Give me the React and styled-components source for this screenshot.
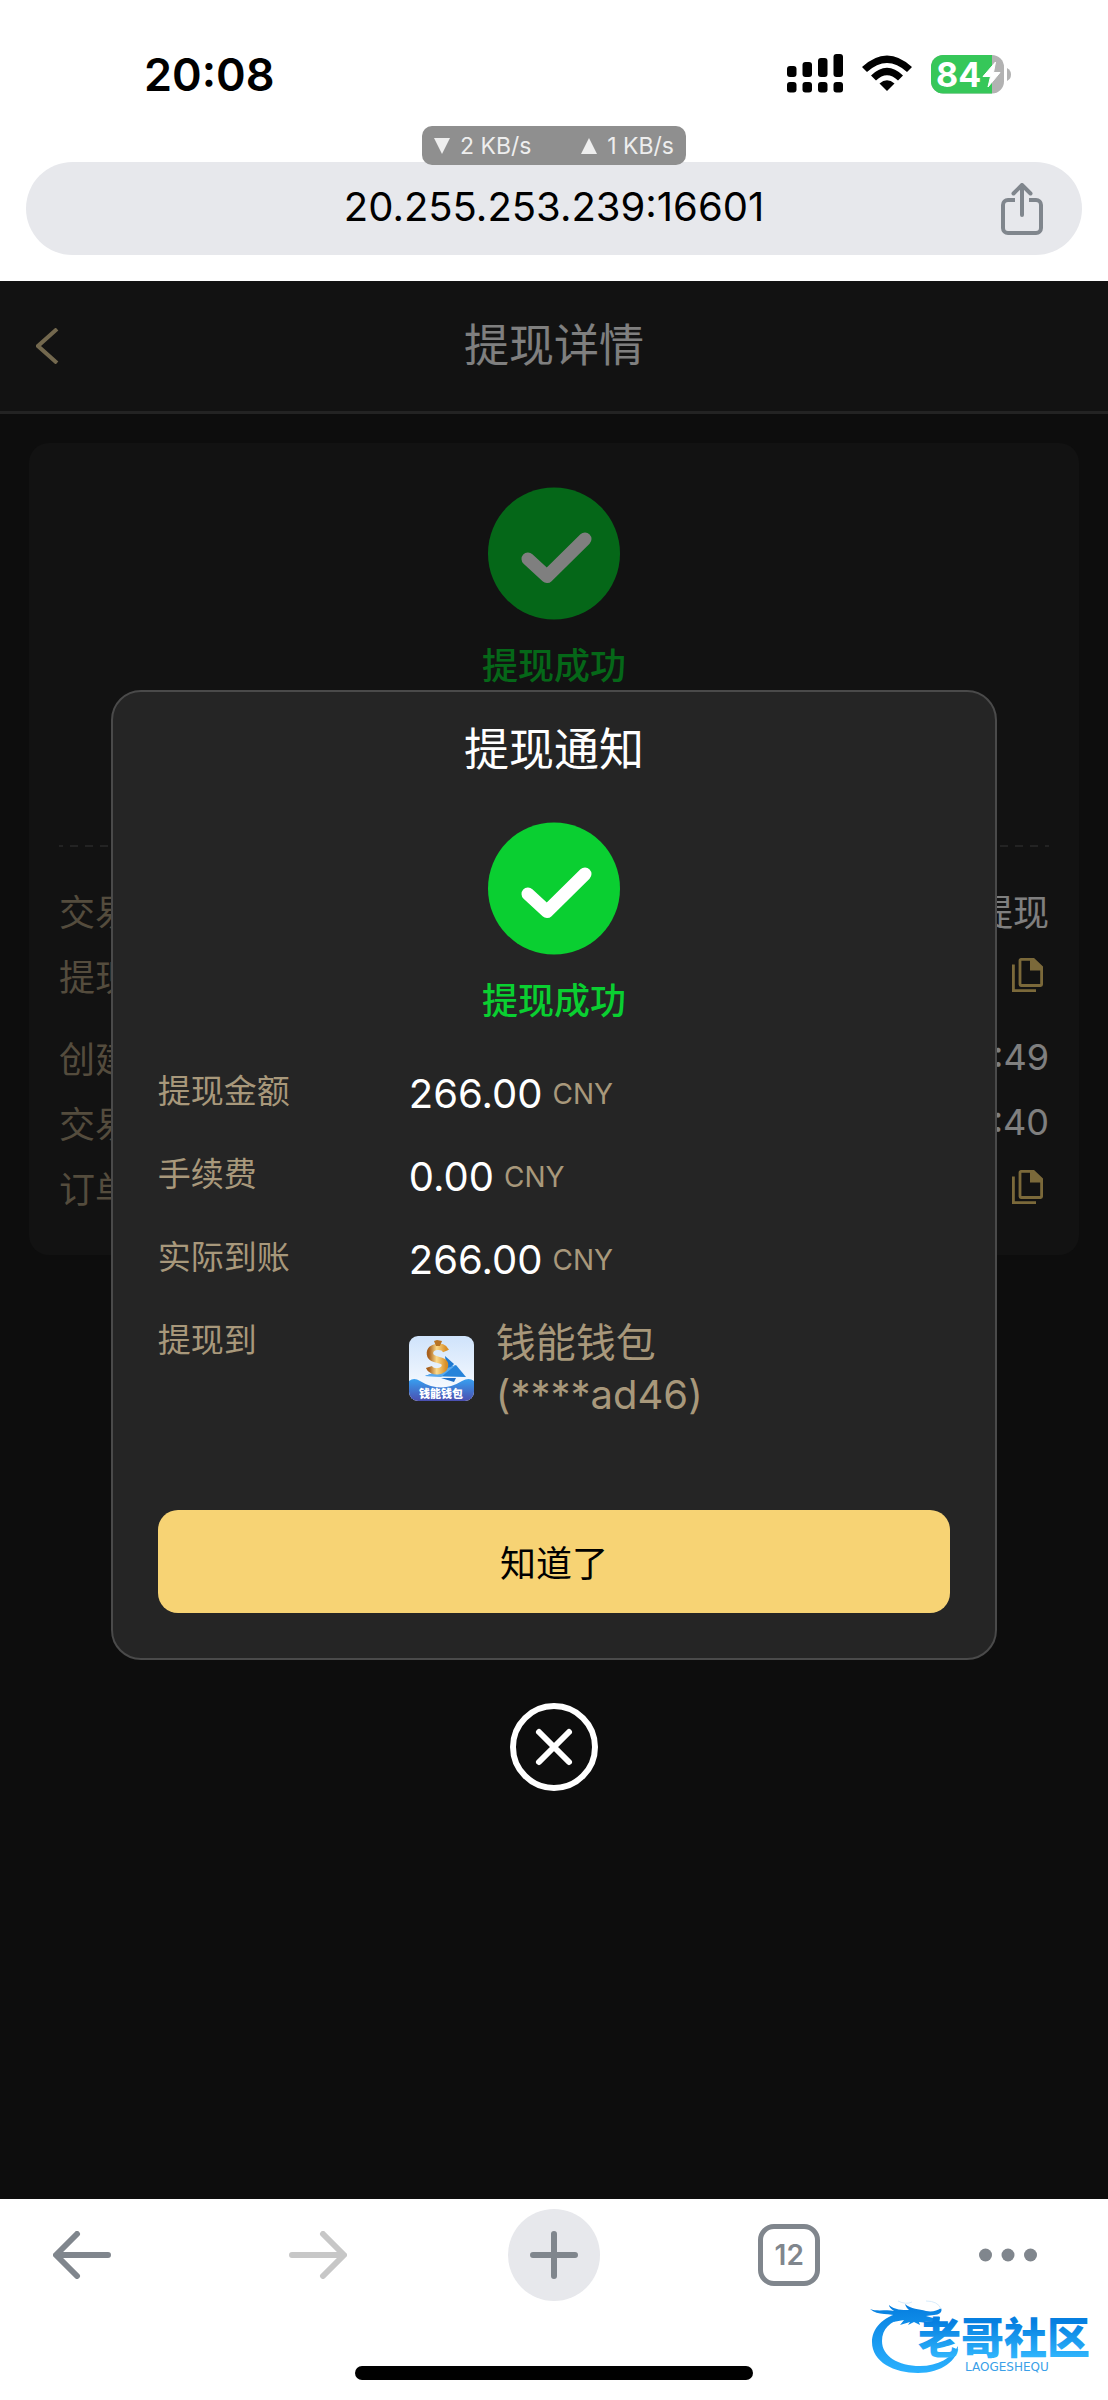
import styled, { createGlobalStyle } from 'styled-components';

const GlobalStyle = createGlobalStyle`
  *, *::before, *::after {
    box-sizing: border-box;
  }

  body {
    margin: 0;
    background-color: #fff;
    font-family: Inter, 'Noto Sans CJK SC', sans-serif;
  }

  h1, h2, p, dl, dd {
    margin: 0;
    font-weight: 400;
  }

  button, input {
    font-family: inherit;
    border: none;
    padding: 0;
    background: none;
    color: inherit;
  }

  svg {
    display: block;
    flex-shrink: 0;
  }
`;

const Screen = styled.div`
  display: flex;
  flex-direction: column;
  min-height: 100vh;
`;

const BrowserTop = styled.header`
  position: relative;
  padding: 46px 26px 26px;
`;

const StatusBar = styled.div`
  display: flex;
  justify-content: space-between;
  align-items: center;
  height: 56px;
  margin-bottom: 60px;
  padding: 0 71px 0 118px;
`;

const Clock = styled.time`
  font-size: 45px;
  font-weight: 600;
`;

const StatusIcons = styled.div`
  display: flex;
  align-items: center;
  gap: 19px;
`;

const SpeedBadge = styled.div`
  position: absolute;
  top: 126px;
  left: 50%;
  transform: translateX(-50%);
  display: flex;
  align-items: center;
  justify-content: space-between;
  width: 264px;
  height: 39px;
  padding: 0 12px;
  border-radius: 10px;
  background-color: #8f8f8f;
  color: #eee;
  font-size: 23px;

  & span {
    display: flex;
    align-items: center;
    gap: 10px;
  }
`;

const AddressBar = styled.div`
  display: grid;
  grid-template-columns: 42px 1fr 42px;
  align-items: center;
  height: 93px;
  padding: 0 39px;
  border-radius: 47px;
  background-color: #e7e8ec;

  & input {
    grid-column: 2;
    min-width: 0;
    padding-bottom: 4px;
    font-size: 40px;
    line-height: 50px;
    text-align: center;
    color: #000;
  }
`;

const Page = styled.div`
  position: relative;
  flex: 1;
  background-color: #1a1a1a;
`;

const PageHeader = styled.header`
  display: grid;
  grid-template-columns: 60px 1fr 60px;
  align-items: center;
  height: 133px;
  padding: 0 36px;
  border-bottom: 3px solid #464646;
  background-color: #242424;
  color: #fff;
`;

const Title = styled.h1`
  font-size: 45px;
  line-height: 60px;
  text-align: center;
`;

const Card = styled.section`
  margin: 29px;
  padding: 44px 30px 36px;
  border-radius: 20px;
  background-color: #242424;
`;

const Status = styled.div`
  display: flex;
  flex-direction: column;
  align-items: center;
  gap: 21px;
  color: #0acf31;
  font-size: 36px;
  line-height: 50px;

  & p {
    font-weight: 500;
  }
`;

const Divider = styled.div`
  height: 2px;
  margin: 154px 0 30px;
  background: linear-gradient(90deg, #464646 25%, transparent 25% 75%, #464646 75%) 0 0 / 15px 2px round;
`;

const DetailGroup = styled.dl`
  & + & {
    margin-top: 17px;
  }
`;

const DetailRow = styled.div`
  display: flex;
  justify-content: space-between;
  align-items: center;
  height: 65px;
  font-size: 36px;

  & dt {
    color: #a8987b;
  }

  & dd {
    color: #fff;
  }
`;

const CopyButton = styled.button`
  display: block;
  padding-right: 6px;
`;

const Overlay = styled.div`
  position: absolute;
  inset: 0;
  display: flex;
  flex-direction: column;
  justify-content: center;
  align-items: center;
  gap: 43px;
  background-color: rgba(0, 0, 0, 0.5);
`;

const Modal = styled.section`
  width: 80%;
  padding: 28px 45px 45px;
  border: 2px solid #4a4a4a;
  border-radius: 30px;
  background-color: #252525;
  color: #fff;

  & ${Status} {
    margin: 42px 0;
  }
`;

const Amounts = styled.dl`
  display: flex;
  flex-direction: column;
  gap: 31px;
  margin-bottom: 89px;
`;

const AmountRow = styled.div`
  display: grid;
  grid-template-columns: 251px 1fr;
  align-items: start;

  & dt {
    color: #a8987b;
    font-size: 33px;
    line-height: 46px;
  }

  & dd {
    display: flex;
    align-items: center;
    gap: 10px;
    font-size: 40px;
    line-height: 52px;
  }
`;

const Currency = styled.span`
  color: #a8987b;
  font-size: 28px;
`;

const WalletName = styled.span`
  width: 240px;
  margin-left: 12px;
  color: #a8987b;
  font-size: 40px;
`;

const ConfirmButton = styled.button`
  display: block;
  width: 100%;
  height: 103px;
  border-radius: 20px;
  background-color: #f7d374;
  color: #000;
  font-size: 36px;
`;

const Toolbar = styled.nav`
  display: flex;
  justify-content: space-between;
  height: 102px;
  padding: 10px 71px 0 36px;
`;

const ToolButton = styled.button`
  display: grid;
  place-items: center;
  width: ${(props) => props.$width || 92}px;
  height: 92px;
  border-radius: 50%;
  background-color: ${(props) => (props.$filled ? '#e7e8ec' : 'transparent')};
  color: ${(props) => (props.$muted ? '#c7c7c7' : '#80868d')};
`;

const TabCount = styled.span`
  display: grid;
  place-items: center;
  width: 62px;
  height: 62px;
  border: 5px solid #80868d;
  border-radius: 16px;
  font-size: 28px;
  font-weight: 600;
`;

const BrowserBottom = styled.footer`
  position: relative;
  padding-bottom: 20px;
`;

const HomeIndicator = styled.div`
  width: 36%;
  height: 14px;
  margin: 65px auto 0;
  border-radius: 7px;
  background-color: #000;
`;

const Watermark = styled.svg`
  position: absolute;
  right: 14px;
  bottom: 22px;
`;

function Signal() {
  return (
    <svg width="56" height="40" viewBox="0 0 56 40">
      {[12, 8, 4, 0].map((top, i) => (
        <g key={top}>
          <rect x={i * 15.5} y={top} width="9.5" height={23 - top} rx="3" />
          <rect x={i * 15.5} y="28" width="9.5" height="10.5" rx="3" />
        </g>
      ))}
    </svg>
  );
}

function Wifi() {
  return (
    <svg width="50" height="38" viewBox="0 0 50 38">
      <path d="M0 12Q25-11 50 12L45 17Q25-1 5 17Z" />
      <path d="M9 20.500Q25 5 41 20.500L36 25.500Q25 15 14 25.500Z" />
      <path d="M17.500 28.500Q25 22 32.500 28.500L25 36Z" />
    </svg>
  );
}

function Battery() {
  return (
    <svg width="80" height="39" viewBox="0 0 80 39">
      <clipPath id="cell">
        <rect width="73" height="38.500" rx="12" />
      </clipPath>
      <g clipPath="url(#cell)">
        <rect width="73" height="39" fill="#b2b2b2" />
        <rect width="61" height="39" fill="#36c759" />
      </g>
      <path d="M76 13Q80 15 80 19.500T76 26Z" fill="#b2b2b2" />
      <text x="5" y="32" fill="#fff" fontSize="34" fontWeight="700" fontFamily="Inter">
        84
      </text>
      <path
        d="M64.500 7L52 21.500H59.500L57 32L69 17.500H62.500Z"
        fill="#fff"
        stroke="#fff"
        strokeLinejoin="round"
      />
    </svg>
  );
}

function ShareIcon() {
  return (
    <svg width="42" height="52" viewBox="0 0 42 52" fill="none" stroke="#80868d" strokeWidth="4">
      <path d="M14 17H7a5 5 0 0 0-5 5V45a5 5 0 0 0 5 5H35a5 5 0 0 0 5-5V22a5 5 0 0 0-5-5H28" />
      <path d="M21 32V2.500M12.500 10.500L21 2L29.500 10.500" strokeLinecap="round" strokeLinejoin="round" />
    </svg>
  );
}

function CheckIcon() {
  return (
    <svg width="132" height="133" viewBox="0 0 132 133">
      <circle cx="66" cy="66.500" r="66" fill="#0acf31" />
      <path
        d="M40 72L59 89.500L97 52"
        fill="none"
        stroke="#fff"
        strokeWidth="13"
        strokeLinecap="round"
        strokeLinejoin="round"
      />
    </svg>
  );
}

function CopyIcon() {
  return (
    <svg width="31" height="34" viewBox="0 0 31 34" fill="none" stroke="#f7d374" strokeWidth="2.800">
      <path d="M1.400 6.500V32.600H24" />
      <path d="M9 1.400H21.500L29.600 9V26.500a1 1 0 0 1-1 1H9a1 1 0 0 1-1-1V2.400a1 1 0 0 1 1-1Z" />
      <path d="M18 1H22L30 9V12.500H18Z" fill="#f7d374" stroke="none" />
    </svg>
  );
}

function WalletLogo() {
  return (
    <svg width="65" height="65" viewBox="0 0 65 65">
      <defs>
        <linearGradient id="sky" x2="0" y2="1">
          <stop stopColor="#cfe3fb" />
          <stop offset="1" stopColor="#fff" />
        </linearGradient>
        <linearGradient id="wave" x2="0" y2="1">
          <stop stopColor="#379ff0" />
          <stop offset="1" stopColor="#4b4fb0" />
        </linearGradient>
        <linearGradient id="gold" x2="1" y2="0">
          <stop stopColor="#a8601c" />
          <stop offset="0.450" stopColor="#fbd98a" />
          <stop offset="1" stopColor="#d98f27" />
        </linearGradient>
        <clipPath id="tile">
          <rect width="65" height="65" rx="9" />
        </clipPath>
      </defs>
      <g clipPath="url(#tile)">
        <rect width="65" height="65" fill="url(#sky)" />
        <path d="M36 20L45 28L38 36Z" fill="#1d78d0" />
        <path d="M16 40L47 29L57 41Z" fill="#2583da" />
        <path d="M16 40L47 29L32 41Z" fill="#58a9ee" />
        <path d="M32 42H47L45 46Z" fill="#1d6ec8" />
        <path
          d="M37 15C34 8 20 10 21 18C22 26 36 22 36 29C36 37 22 37 20 31"
          fill="none"
          stroke="url(#gold)"
          strokeWidth="6.500"
        />
        <path d="M25 5L28 4L33 5L31 10H27Z" fill="#b87425" />
        <path d="M0 45Q5 41 11 45Q32 58 53 45Q60 41 65 45V65H0Z" fill="url(#wave)" />
        <text x="32" y="61.500" textAnchor="middle" fill="#fff" fontSize="11" fontWeight="900">
          钱能钱包
        </text>
      </g>
    </svg>
  );
}

function SiteLogo() {
  return (
    <Watermark width="226" height="82" viewBox="0 0 226 82">
      <defs>
        <linearGradient id="ring" gradientUnits="userSpaceOnUse" x1="0" y1="10" x2="0" y2="78">
          <stop stopColor="#067fe0" />
          <stop offset="1" stopColor="#2bb2ff" />
        </linearGradient>
        <linearGradient id="word" gradientUnits="userSpaceOnUse" x1="0" y1="26" x2="0" y2="61">
          <stop stopColor="#067fe0" />
          <stop offset="1" stopColor="#2fb4fc" />
        </linearGradient>
      </defs>
      <g fill="url(#ring)">
        <path d="M34 16C14 21 4 33 4 46C4 66 26 77 50 77C74 77 90 64 90 50C84 62 70 70 52 70C30 70 14 60 14 45C14 33 22 25 36 22Z" />
        <path d="M2 13C10 16 19 13 26 15C23 13 21 11 21 9C27 14 34 14 41 14C39 12 38 11 37 8C43 13 51 13 58 15C64 16 69 15 73 12C75 16 71 19 66 19L58 20L65 22L72 21C72 25 69 27 65 26L56 25L60 27L51 26L52 29L46 26L40 29L42 26L32 29L36 24L25 26L31 20C22 17 10 20 2 13Z" />
      </g>
      <path d="M30 5Q38 9 44 6M58 5Q70 5 73 13" fill="none" stroke="#d9ecfb" />
      <text x="50" y="58" fill="url(#word)" fontSize="43" fontWeight="900">
        老哥社区
      </text>
      <text x="97" y="75" fill="#3a9fe8" fontSize="12" fontFamily="DejaVu Sans">
        LAOGESHEQU
      </text>
    </Watermark>
  );
}

function Success() {
  return (
    <Status>
      <CheckIcon />
      <p>提现成功</p>
    </Status>
  );
}

const amounts = [
  { label: '提现金额', value: '266.00' },
  { label: '手续费', value: '0.00' },
  { label: '实际到账', value: '266.00' },
];

const details = [
  [
    { label: '交易', value: '提现' },
    { label: '提现', copy: true },
  ],
  [
    { label: '创建', value: ':49' },
    { label: '交易', value: ':40' },
    { label: '订单', copy: true },
  ],
];

function App() {
  return (
    <Screen>
      <GlobalStyle />
      <BrowserTop>
        <StatusBar>
          <Clock>20:08</Clock>
          <StatusIcons>
            <Signal />
            <Wifi />
            <Battery />
          </StatusIcons>
        </StatusBar>
        <AddressBar>
          <input type="text" aria-label="URL" defaultValue="20.255.253.239:16601" />
          <button aria-label="Share">
            <ShareIcon />
          </button>
        </AddressBar>
        <SpeedBadge>
          <span>
            <svg width="16" height="16" viewBox="0 0 16 16" fill="#eee">
              <path d="M0 0H16L8 16Z" />
            </svg>
            2 KB/s
          </span>
          <span>
            <svg width="16" height="16" viewBox="0 0 16 16" fill="#eee">
              <path d="M8 0L16 16H0Z" />
            </svg>
            1 KB/s
          </span>
        </SpeedBadge>
      </BrowserTop>

      <Page>
        <PageHeader>
          <button aria-label="Back">
            <svg width="23" height="36" viewBox="0 0 23 36" fill="none" stroke="#e6d09c" strokeWidth="4">
              <path d="M21 1L2 18L21 35" />
            </svg>
          </button>
          <Title>提现详情</Title>
        </PageHeader>
        <Card>
          <Success />
          <Divider />
          {details.map((group, index) => (
            <DetailGroup key={index}>
              {group.map((item) => (
                <DetailRow key={item.label}>
                  <dt>{item.label}</dt>
                  <dd>
                    {item.copy ? (
                      <CopyButton aria-label="Copy">
                        <CopyIcon />
                      </CopyButton>
                    ) : (
                      item.value
                    )}
                  </dd>
                </DetailRow>
              ))}
            </DetailGroup>
          ))}
        </Card>

        <Overlay>
          <Modal role="dialog" aria-labelledby="notice-title">
            <Title as="h2" id="notice-title">
              提现通知
            </Title>
            <Success />
            <Amounts>
              {amounts.map((item) => (
                <AmountRow key={item.label}>
                  <dt>{item.label}</dt>
                  <dd>
                    {item.value} <Currency>CNY</Currency>
                  </dd>
                </AmountRow>
              ))}
              <AmountRow>
                <dt>提现到</dt>
                <dd>
                  <WalletLogo />
                  <WalletName>钱能钱包 (****ad46)</WalletName>
                </dd>
              </AmountRow>
            </Amounts>
            <ConfirmButton>知道了</ConfirmButton>
          </Modal>
          <button aria-label="Close">
            <svg width="88" height="88" viewBox="0 0 88 88" fill="none" stroke="#fff" strokeWidth="6">
              <circle cx="44" cy="44" r="41" />
              <path d="M29 29L59 59M59 29L29 59" strokeLinecap="round" />
            </svg>
          </button>
        </Overlay>
      </Page>

      <BrowserBottom>
        <Toolbar>
          <ToolButton aria-label="Go back">
            <svg width="58" height="48" viewBox="0 0 58 48" fill="none" stroke="currentColor" strokeWidth="6" strokeLinecap="round" strokeLinejoin="round">
              <path d="M55 24H4M24 3L3 24L24 45" />
            </svg>
          </ToolButton>
          <ToolButton aria-label="Go forward" $muted>
            <svg width="58" height="48" viewBox="0 0 58 48" fill="none" stroke="currentColor" strokeWidth="6" strokeLinecap="round" strokeLinejoin="round">
              <path d="M3 24H54M34 3L55 24L34 45" />
            </svg>
          </ToolButton>
          <ToolButton aria-label="New tab" $filled>
            <svg width="48" height="48" viewBox="0 0 48 48" fill="none" stroke="currentColor" strokeWidth="6" strokeLinecap="round">
              <path d="M24 3V45M3 24H45" />
            </svg>
          </ToolButton>
          <ToolButton aria-label="Tabs">
            <TabCount>12</TabCount>
          </ToolButton>
          <ToolButton aria-label="Menu" $width={58}>
            <svg width="58" height="14" viewBox="0 0 58 14" fill="currentColor">
              <circle cx="6.500" cy="7" r="6.500" />
              <circle cx="29" cy="7" r="6.500" />
              <circle cx="51.500" cy="7" r="6.500" />
            </svg>
          </ToolButton>
        </Toolbar>
        <HomeIndicator />
        <SiteLogo />
      </BrowserBottom>
    </Screen>
  );
}

export default App;
